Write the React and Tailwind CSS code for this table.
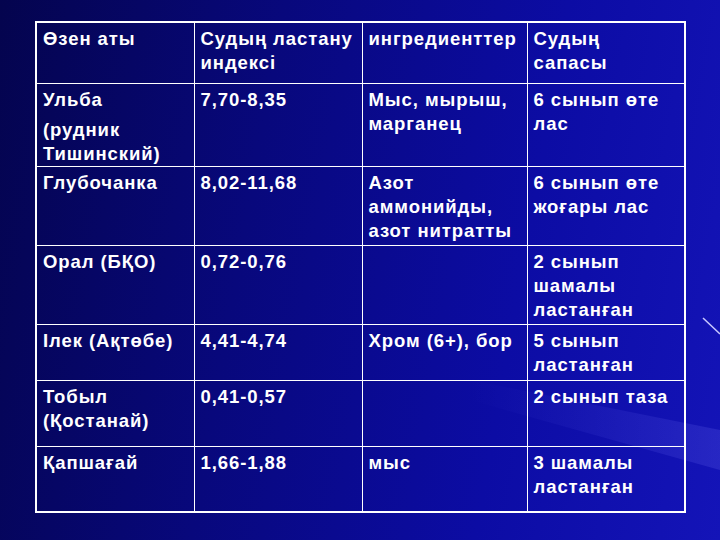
import React from 'react'

// Rows of the river pollution table; each cell is a list of lines
const rows = [
  {
    h: 'h-[83px]',
    cells: [['Ульба', '(рудник', 'Тишинский)'], ['7,70-8,35'], ['Мыс, мырыш,', 'марганец'], ['6 сынып өте', 'лас']],
    gapFirst: true,
  },
  {
    h: 'h-[79px]',
    cells: [['Глубочанка'], ['8,02-11,68'], ['Азот', 'аммонийды,', 'азот нитратты'], ['6 сынып өте', 'жоғары лас']],
  },
  {
    h: 'h-[79px]',
    cells: [['Орал (БҚО)'], ['0,72-0,76'], [], ['2 сынып', 'шамалы', 'ластанған']],
  },
  {
    h: 'h-[56px]',
    cells: [['Ілек (Ақтөбе)'], ['4,41-4,74'], ['Хром (6+), бор'], ['5 сынып', 'ластанған']],
  },
  {
    h: 'h-[66px]',
    cells: [['Тобыл', '(Қостанай)'], ['0,41-0,57'], [], ['2 сынып таза']],
  },
  {
    h: 'h-[66px]',
    cells: [['Қапшағай'], ['1,66-1,88'], ['мыс'], ['3 шамалы', 'ластанған']],
  },
]

const header = [['Өзен аты'], ['Судың ластану', 'индексі'], ['ингредиенттер'], ['Судың', 'сапасы']]

function Cell({ lines, gapFirst }) {
  return (
    <td className="border border-white align-top pl-[6px] pr-[4px] pt-[4px]">
      {lines.map((l, i) => (
        <div key={i} className={gapFirst && i === 0 ? 'mb-[6px]' : ''}>
          {l}
        </div>
      ))}
    </td>
  )
}

export default function App() {
  return (
    <div className="relative w-[720px] h-[540px] overflow-hidden bg-[linear-gradient(100deg,#04044e_0%,#08087c_35%,#0c0ca4_70%,#1414b8_100%)]">
      <svg className="absolute inset-0 pointer-events-none" width="720" height="540">
        <defs>
          <linearGradient id="streak" x1="0" y1="0" x2="1" y2="0">
            <stop offset="0" stopColor="#6a6aff" stopOpacity="0" />
            <stop offset="1" stopColor="#8080ff" stopOpacity="0.18" />
          </linearGradient>
        </defs>
        <polygon points="470,380 720,430 720,470 470,400" fill="url(#streak)" />
        <line x1="703" y1="318" x2="720" y2="334" stroke="#c8c8ff" strokeWidth="1.5" />
      </svg>
      <div className="relative pl-[35px] pt-[21px]">
        <table
          className="border-collapse border-2 border-white text-white font-bold text-[18.5px] leading-[24px] tracking-[0.05em]"
          style={{ fontFamily: '"Liberation Sans", Arial, sans-serif' }}
        >
          <colgroup>
            <col className="w-[158px]" />
            <col className="w-[168px]" />
            <col className="w-[165px]" />
            <col className="w-[158px]" />
          </colgroup>
          <tbody>
            <tr className="h-[61px]">
              {header.map((c, i) => (
                <Cell key={i} lines={c} />
              ))}
            </tr>
            {rows.map((r, ri) => (
              <tr key={ri} className={r.h}>
                {r.cells.map((c, ci) => (
                  <Cell key={ci} lines={c} gapFirst={r.gapFirst && ci === 0} />
                ))}
              </tr>
            ))}
          </tbody>
        </table>
      </div>
    </div>
  )
}
